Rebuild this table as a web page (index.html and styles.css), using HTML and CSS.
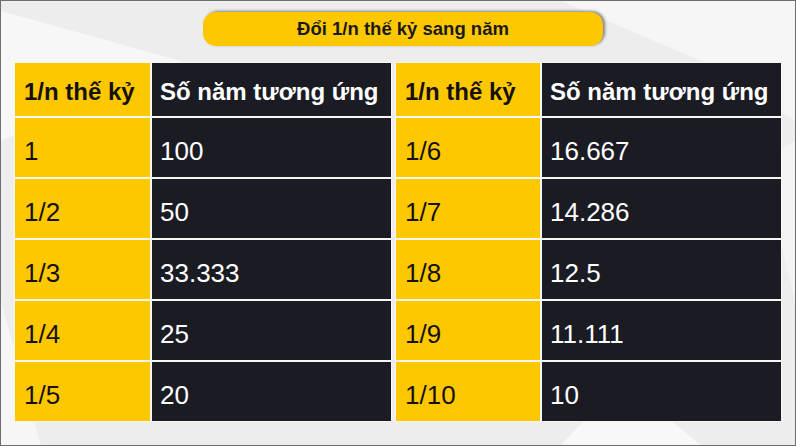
FILE: index.html
```html
<!DOCTYPE html>
<html lang="vi">
<head>
<meta charset="utf-8">
<title>Đổi 1/n thế kỷ sang năm</title>
<link rel="stylesheet" href="styles.css">
</head>
<body>
<div class="frame">
  <svg class="deco" width="794" height="444" viewBox="0 0 794 444" aria-hidden="true">
    <polygon points="0,10 180,60 0,140" fill="#ffffff" opacity="0.55"/>
    <polygon points="560,0 794,0 794,120 700,60" fill="#ffffff" opacity="0.5"/>
    <polygon points="560,444 620,380 700,444" fill="#ffffff" opacity="0.6"/>
    <polygon points="0,300 40,444 0,444" fill="#ffffff" opacity="0.5"/>
    <polygon points="760,160 794,140 794,300" fill="#ffffff" opacity="0.4"/>
  </svg>
  <div class="title-row">
    <div class="title">Đổi 1/n thế kỷ sang năm</div>
  </div>
  <div class="tables">
    <div class="table left">
      <div class="cell yh">1/n thế kỷ</div><div class="cell dh">Số năm tương ứng</div>
      <div class="cell y">1</div><div class="cell d">100</div>
      <div class="cell y">1/2</div><div class="cell d">50</div>
      <div class="cell y">1/3</div><div class="cell d">33.333</div>
      <div class="cell y">1/4</div><div class="cell d">25</div>
      <div class="cell y">1/5</div><div class="cell d">20</div>
    </div>
    <div class="table right">
      <div class="cell yh">1/n thế kỷ</div><div class="cell dh">Số năm tương ứng</div>
      <div class="cell y">1/6</div><div class="cell d">16.667</div>
      <div class="cell y">1/7</div><div class="cell d">14.286</div>
      <div class="cell y">1/8</div><div class="cell d">12.5</div>
      <div class="cell y">1/9</div><div class="cell d">11.111</div>
      <div class="cell y">1/10</div><div class="cell d">10</div>
    </div>
  </div>
</div>
</body>
</html>
```
FILE: styles.css
```css
html, body {
  margin: 0;
  padding: 0;
}
body {
  font-family: "Liberation Sans", Arial, sans-serif;
  background: #ececec;
}
.frame {
  position: relative;
  width: 794px;
  height: 444px;
  border: 1px solid #6e6e6e;
  background: #ededed;
  overflow: hidden;
}
.deco {
  position: absolute;
  left: 0;
  top: 0;
  z-index: 0;
}
.title-row {
  position: relative;
  z-index: 1;
  display: flex;
  padding: 11px 0 0 202px;
}
.title {
  width: 400px;
  height: 34px;
  border-radius: 13px;
  background: #fec800;
  box-shadow: 2px -1px 3px rgba(0, 0, 0, 0.45);
  display: flex;
  align-items: center;
  justify-content: center;
  font-weight: bold;
  font-size: 18.5px;
  color: #1a1a1a;
}
.tables {
  position: relative;
  z-index: 1;
  display: flex;
  gap: 3px;
  padding: 16px 0 0 13px;
}
.table {
  display: grid;
  grid-template-rows: 53px repeat(5, 59px);
  gap: 2px;
  padding: 1px;
  background: #f6f6f6;
}
.table.left {
  grid-template-columns: 135px 239px;
}
.table.right {
  grid-template-columns: 144px 239px;
}
.cell {
  display: flex;
  align-items: center;
  padding: 4px 0 0 9px;
  box-sizing: border-box;
}
.yh, .y {
  background: #fec800;
  color: #15110a;
}
.dh, .d {
  background: #1b1b24;
  color: #ffffff;
}
.yh, .dh {
  font-weight: bold;
  font-size: 24px;
}
.y, .d {
  font-size: 26px;
  padding-top: 7px;
}
.dh, .d {
  padding-left: 8px;
}
```
